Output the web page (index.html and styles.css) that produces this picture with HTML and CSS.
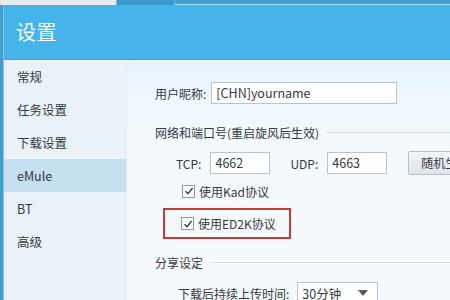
FILE: index.html
```html
<!DOCTYPE html>
<html lang="zh-CN">
<head>
<meta charset="utf-8">
<title>设置</title>
<link rel="stylesheet" href="styles.css">
</head>
<body>
<div class="topstrip">
  <div class="seg seg-a"></div>
  <div class="seg seg-b"></div>
  <div class="seg seg-c"></div>
</div>
<div class="window">
  <div class="header"><span class="title">设置</span></div>
  <div class="main">
    <ul class="sidebar">
      <li class="nav">常规</li>
      <li class="nav">任务设置</li>
      <li class="nav">下载设置</li>
      <li class="nav active">eMule</li>
      <li class="nav">BT</li>
      <li class="nav">高级</li>
    </ul>
    <div class="content">
      <div class="row row-nick">
        <span class="label">用户昵称:</span>
        <div class="input input-nick">[CHN]yourname</div>
      </div>
      <div class="section sec-net"><span>网络和端口号(重启旋风后生效)</span><i class="rule"></i></div>
      <div class="row row-port">
        <span class="label">TCP:</span>
        <div class="input input-port">4662</div>
        <span class="label label-udp">UDP:</span>
        <div class="input input-port">4663</div>
        <div class="button">随机生成</div>
      </div>
      <div class="check check-kad">
        <span class="box"><svg width="10" height="10" viewBox="0 0 10 10"><path d="M1.5 5.2 L4 7.6 L8.6 2" fill="none" stroke="#3d4247" stroke-width="1.4"/></svg></span>
        <span>使用Kad协议</span>
      </div>
      <div class="highlight">
        <div class="check">
          <span class="box"><svg width="10" height="10" viewBox="0 0 10 10"><path d="M1.5 5.2 L4 7.6 L8.6 2" fill="none" stroke="#3d4247" stroke-width="1.4"/></svg></span>
          <span>使用ED2K协议</span>
        </div>
      </div>
      <div class="section sec-share"><span>分享设定</span><i class="rule"></i></div>
      <div class="row row-seed">
        <span class="label">下载后持续上传时间:</span>
        <div class="select"><span>30分钟</span><i class="tri"></i></div>
      </div>
    </div>
  </div>
</div>
</body>
</html>
```

FILE: styles.css
```css
* { box-sizing: border-box; }
html, body {
  margin: 0;
  padding: 0;
  width: 450px;
  height: 300px;
  overflow: hidden;
}
body {
  font-family: "Noto Sans CJK SC", "Noto Sans", sans-serif;
  font-size: 12px;
  color: #333a40;
  background: #3aa0d6;
  display: flex;
  flex-direction: column;
}
.topstrip {
  height: 5px;
  display: flex;
  flex: none;
}
.seg { height: 5px; }
.seg-a { width: 117px; background: #e6ebef; border-right: 1px solid #9fb3c0; }
.seg-b { width: 58px; background: #3b98cf; border-right: 1px solid #6fc0e6; }
.seg-c { flex: 1; background: #3d9fd6; border-bottom: 1px solid #a9dcf3; }
.window {
  flex: 1;
  margin-left: 3px;
  border-left: 1px solid #a7b6c0;
  display: flex;
  flex-direction: column;
  background: #f6f9fb;
}
.header {
  height: 55px;
  flex: none;
  background: #44b4ea;
  border-bottom: 1px solid #3ba4da;
  display: flex;
  align-items: center;
  padding-left: 12px;
}
.title {
  color: #ffffff;
  font-size: 20px;
  letter-spacing: 0.5px;
  margin-top: -2px;
}
.main {
  flex: 1;
  display: flex;
}
.sidebar {
  list-style: none;
  margin: 0;
  padding: 0;
  width: 123px;
  flex: none;
  background: #eaf2f8;
  border-right: 1px solid #e0eaf1;
}
.nav {
  height: 33px;
  line-height: 33px;
  padding-left: 13px;
  font-size: 12.5px;
  color: #333a40;
}
.nav.active {
  background: #c6dff0;
}
.content {
  flex: 1;
  padding-left: 28px;
  padding-top: 22px;
  display: flex;
  flex-direction: column;
  background: linear-gradient(#e3f3fc 0px, #eff8fd 40px, #f6f9fc 110px, #f6f9fb 100%);
}
.row {
  display: flex;
  align-items: center;
  height: 22px;
  flex: none;
}
.label { white-space: nowrap; }
.input {
  height: 22px;
  background: #ffffff;
  border: 1px solid #b9c3cb;
  padding-left: 4px;
  line-height: 20px;
  font-size: 12.5px;
  white-space: nowrap;
}
.input-nick {
  width: 186px;
  margin-left: 5px;
}
.row-port {
  margin-top: 12px;
  padding-left: 21px;
}
.input-port {
  width: 60px;
  margin-left: 9px;
}
.label-udp { margin-left: 20px; }
.button {
  margin-left: 21px;
  height: 24px;
  width: 60px;
  flex: none;
  border: 1px solid #b5c0c8;
  border-radius: 2px;
  background: linear-gradient(#f3f5f7, #dfe5ea);
  line-height: 22px;
  padding-left: 12px;
  white-space: nowrap;
  overflow: hidden;
}
.section {
  display: flex;
  align-items: center;
  height: 16px;
  flex: none;
}
.section span { white-space: nowrap; }
.rule {
  flex: 1;
  height: 1px;
  background: #d6dee4;
  margin-left: 8px;
}
.sec-net { margin-top: 20px; }
.sec-share { margin-top: 15px; }
.check {
  display: flex;
  align-items: center;
  height: 16px;
  flex: none;
}
.check-kad {
  margin-top: 9px;
  padding-left: 27px;
}
.box {
  width: 13px;
  height: 13px;
  border: 1px solid #8e9aa4;
  background: #ffffff;
  margin-right: 4px;
  display: flex;
  align-items: center;
  justify-content: center;
}
.highlight {
  margin-top: 9px;
  margin-left: 8px;
  width: 128px;
  height: 31px;
  border: 2px solid #c8393c;
  padding-left: 16px;
  display: flex;
  align-items: center;
  flex: none;
}
.row-seed {
  margin-top: 12px;
  padding-left: 23px;
}
.select {
  margin-left: 8px;
  width: 81px;
  height: 22px;
  border: 1px solid #b9c3cb;
  background: #ffffff;
  display: flex;
  align-items: center;
  padding-left: 4px;
  position: relative;
}
.select span { flex: 1; font-size: 12.5px; }
.tri {
  width: 0;
  height: 0;
  border-left: 5px solid transparent;
  border-right: 5px solid transparent;
  border-top: 6px solid #50585f;
  margin-right: 9px;
}
```
